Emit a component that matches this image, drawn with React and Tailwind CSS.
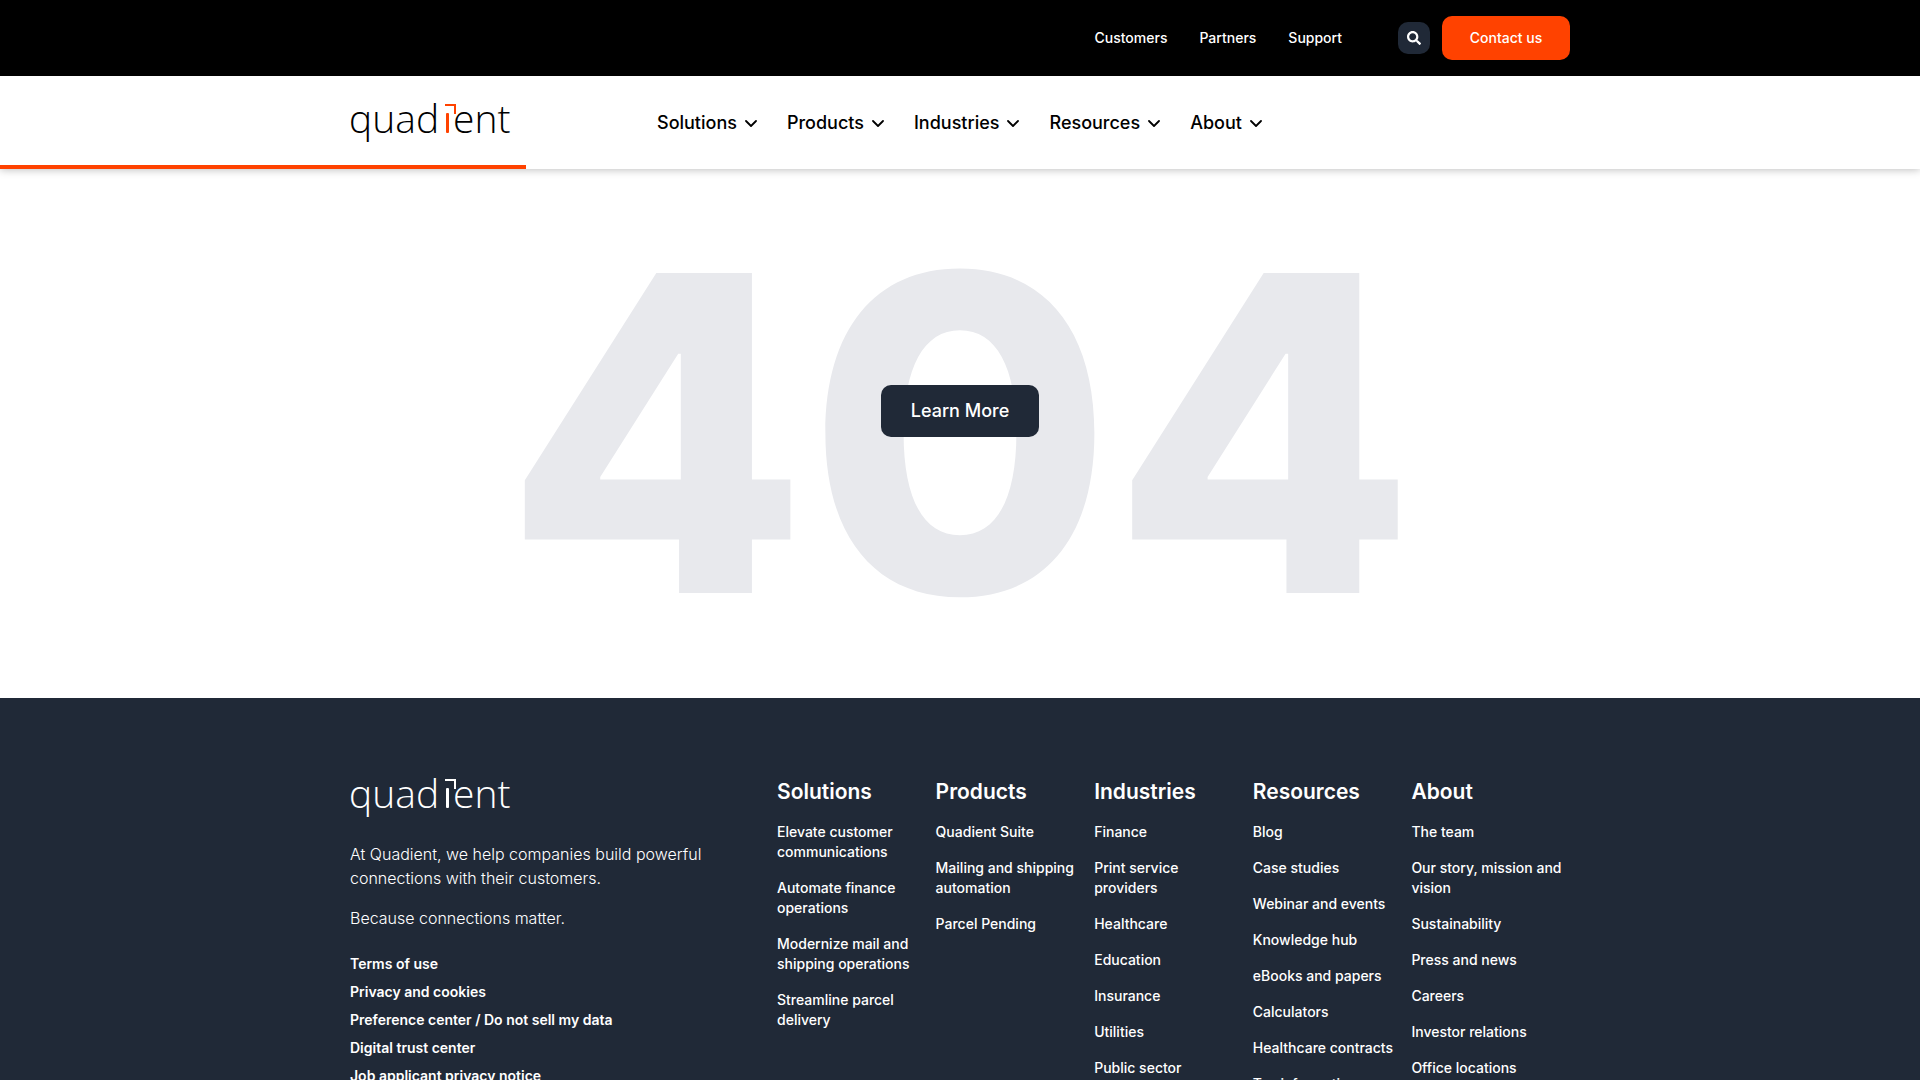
import React from "react";
import { FaSearch } from "react-icons/fa";

const topLinks = ["Customers", "Partners", "Support"];
const navItems = ["Solutions", "Products", "Industries", "Resources", "About"];

const legalLinks = [
  "Terms of use",
  "Privacy and cookies",
  "Preference center / Do not sell my data",
  "Digital trust center",
  "Job applicant privacy notice",
];

const columns = [
  {
    title: "Solutions",
    links: [
      "Elevate customer communications",
      "Automate finance operations",
      "Modernize mail and shipping operations",
      "Streamline parcel delivery",
    ],
  },
  {
    title: "Products",
    links: ["Quadient Suite", "Mailing and shipping automation", "Parcel Pending"],
  },
  {
    title: "Industries",
    links: [
      "Finance",
      "Print service providers",
      "Healthcare",
      "Education",
      "Insurance",
      "Utilities",
      "Public sector",
    ],
  },
  {
    title: "Resources",
    links: [
      "Blog",
      "Case studies",
      "Webinar and events",
      "Knowledge hub",
      "eBooks and papers",
      "Calculators",
      "Healthcare contracts",
      "Tax information",
    ],
  },
  {
    title: "About",
    links: [
      "The team",
      "Our story, mission and vision",
      "Sustainability",
      "Press and news",
      "Careers",
      "Investor relations",
      "Office locations",
    ],
  },
];

function Logo({ accent }) {
  return (
    <svg
      className="block h-10 w-40 overflow-visible font-['Open_Sans',sans-serif] text-[39px] font-light"
      viewBox="0 0 160 40"
      role="img"
      aria-label="Quadient"
      fill="currentColor"
    >
      <text x="-1" y="30">quad</text>
      <rect x="96" y="10" width="3" height="20" rx="1" fill={accent} />
      <path d="M95 1H106V11H104V3H95Z" fill={accent} />
      <text x="103" y="30">ent</text>
    </svg>
  );
}

function Chevron() {
  return (
    <svg className="h-3 w-3" viewBox="0 0 12 12" fill="none" aria-hidden="true">
      <path
        d="M1 4L6 9L11 4"
        stroke="currentColor"
        strokeWidth="1.8"
        strokeLinecap="round"
        strokeLinejoin="round"
      />
    </svg>
  );
}

export default function App() {
  return (
    <div className="h-screen overflow-hidden bg-white font-['Inter',sans-serif] text-black">
      <header>
        <div className="bg-black text-sm font-medium text-white">
          <div className="mx-auto flex h-[76px] max-w-[1220px] items-center justify-end">
            <nav className="flex gap-8" aria-label="Secondary">
              {topLinks.map((label) => (
                <a key={label} href="#">{label}</a>
              ))}
            </nav>
            <button
              type="button"
              aria-label="Search"
              className="ml-14 flex size-8 items-center justify-center rounded-[10px] bg-[#202937]"
            >
              <FaSearch className="size-3.5" />
            </button>
            <a
              href="#"
              className="ml-3 flex h-11 w-32 items-center justify-center rounded-[10px] bg-[#ff4200]"
            >
              Contact us
            </a>
          </div>
        </div>
        <div className="relative bg-white shadow-[0_1px_8px_rgba(0,0,0,0.25)]">
          <div className="mx-auto flex h-[93px] max-w-[1220px] items-center">
            <a href="#" aria-label="Home"><Logo accent="#ff4200" /></a>
            <nav className="ml-[147px] flex gap-[30px]" aria-label="Main">
              {navItems.map((label) => (
                <button
                  key={label}
                  type="button"
                  className="flex items-center gap-2 text-lg font-medium"
                >
                  {label}
                  <Chevron />
                </button>
              ))}
            </nav>
          </div>
          <div className="absolute bottom-0 left-0 h-1 w-[526px] bg-[#ff4200]" />
        </div>
      </header>

      <main className="relative py-20">
        <h1 className="text-center text-[440px] leading-[369px] font-extrabold text-[#e8e9ed]">
          404
        </h1>
        <a
          href="#"
          className="absolute top-[216px] left-1/2 flex h-[52px] w-[158px] -translate-x-1/2 items-center justify-center rounded-[10px] bg-[#202937] text-lg font-medium text-white"
        >
          Learn More
        </a>
      </main>

      <footer className="bg-[#202937] pt-20 pb-20 text-white">
        <div className="mx-auto grid max-w-[1220px] grid-cols-[35%_65%]">
          <div>
            <Logo accent="currentColor" />
            <p className="mt-6 pr-10 font-light">
              At Quadient, we help companies build powerful connections with their customers.
            </p>
            <p className="mt-4 font-light">Because connections matter.</p>
            <ul className="mt-6 flex flex-col gap-2 text-sm font-semibold">
              {legalLinks.map((label) => (
                <li key={label}><a href="#">{label}</a></li>
              ))}
            </ul>
          </div>
          <div className="grid grid-cols-5">
            {columns.map(({ title, links }) => (
              <section key={title} className="pr-2">
                <h2 className="text-[21px] leading-7 font-semibold">{title}</h2>
                <ul className="mt-4 flex flex-col gap-4 text-sm font-medium">
                  {links.map((label) => (
                    <li key={label}><a href="#">{label}</a></li>
                  ))}
                </ul>
              </section>
            ))}
          </div>
        </div>
      </footer>
    </div>
  );
}
